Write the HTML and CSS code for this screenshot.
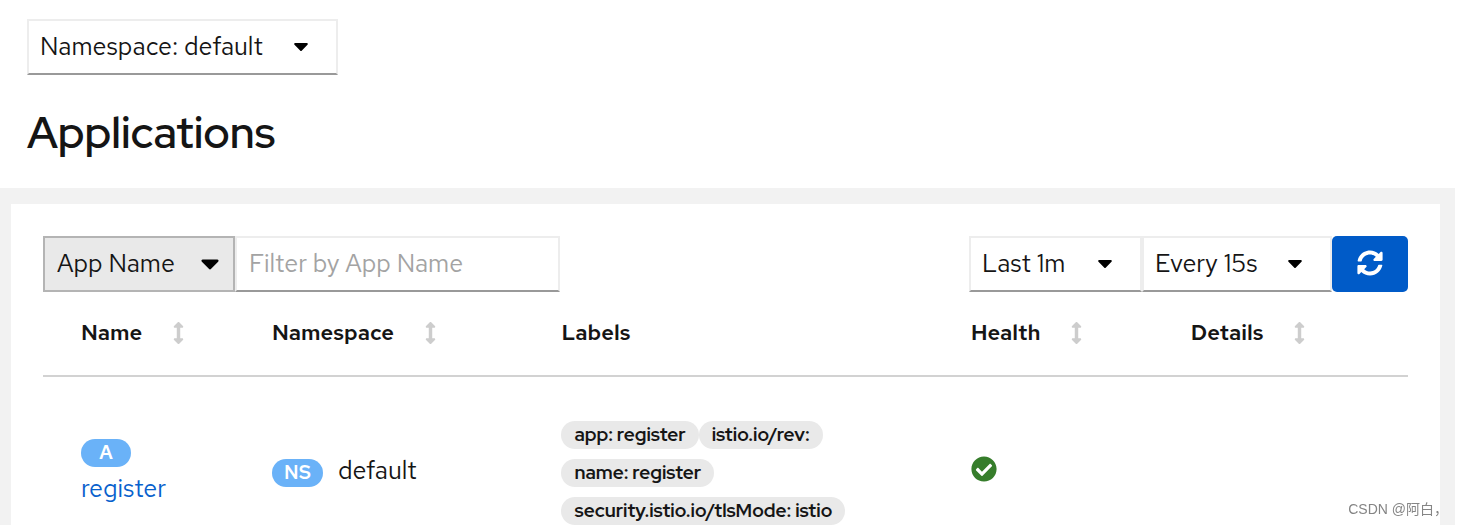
FILE: index.html
```html
<!DOCTYPE html>
<html lang="en">
<head>
<meta charset="utf-8">
<title>Applications</title>
<link rel="stylesheet" href="styles.css">
</head>
<body>
<svg class="sprite" aria-hidden="true">
  <symbol id="caret" viewBox="0 0 16 10"><path d="M2.2 1h11.6c1 0 1.4 1 .7 1.7L8.9 8.4a1.2 1.2 0 0 1-1.8 0L1.500 2.700C.8 2 1.200 1 2.200 1z"/></symbol>
  <symbol id="sort" viewBox="0 0 256 512"><path d="M214.059 377.941H168V134.059h46.059c21.382 0 32.090-25.851 16.971-40.971L144.971 7.029c-9.373-9.373-24.568-9.373-33.941 0L24.971 93.088c-15.119 15.119-4.411 40.971 16.971 40.971H88v243.882H41.941c-21.382 0-32.090 25.851-16.971 40.971l86.059 86.059c9.373 9.373 24.568 9.373 33.941 0l86.059-86.059c15.120-15.119 4.412-40.971-16.970-40.971z"/></symbol>
</svg>
<header class="masthead">
  <div class="picker picker-namespace">
    <select class="select" aria-label="Namespace"><option>Namespace: default</option></select>
    <svg class="caret" aria-hidden="true"><use href="#caret"/></svg>
  </div>
  <h1 class="title">Applications</h1>
</header>
<main class="content">
  <section class="card">
    <div class="toolbar">
      <div class="group">
        <div class="picker picker-filter">
          <select class="select select-gray" aria-label="Filter type"><option>App Name</option></select>
          <svg class="caret caret-large" aria-hidden="true"><use href="#caret"/></svg>
        </div>
        <input class="filter" type="text" placeholder="Filter by App Name" aria-label="Filter by App Name">
      </div>
      <div class="group">
        <div class="picker picker-duration">
          <select class="select" aria-label="Duration"><option>Last 1m</option></select>
          <svg class="caret" aria-hidden="true"><use href="#caret"/></svg>
        </div>
        <div class="picker picker-interval">
          <select class="select" aria-label="Refresh interval"><option>Every 15s</option></select>
          <svg class="caret" aria-hidden="true"><use href="#caret"/></svg>
        </div>
        <button class="refresh" type="button" aria-label="Refresh">
          <svg class="refresh-icon" viewBox="0 0 512 512" aria-hidden="true"><path d="M370.720 133.280C339.458 104.008 298.888 87.962 255.848 88c-77.458.068-144.328 53.178-162.791 126.850-1.344 5.363-6.122 9.150-11.651 9.150H24.103c-7.498 0-13.194-6.807-11.807-14.176C33.933 94.924 134.813 8 256 8c66.448 0 126.791 26.136 171.315 68.685L463.030 40.970C478.149 25.851 504 36.559 504 57.941V192c0 13.255-10.745 24-24 24H345.941c-21.382 0-32.090-25.851-16.971-40.971l41.750-41.749zM32 296h134.059c21.382 0 32.090 25.851 16.971 40.971l-41.750 41.750c31.262 29.273 71.835 45.319 114.876 45.280 77.418-.070 144.315-53.144 162.787-126.849 1.344-5.363 6.122-9.150 11.651-9.150h57.304c7.498 0 13.194 6.807 11.807 14.176C478.067 417.076 377.187 504 256 504c-66.448 0-126.791-26.136-171.315-68.685L48.970 471.030C33.851 486.149 8 475.441 8 454.059V320c0-13.255 10.745-24 24-24z"/></svg>
        </button>
      </div>
    </div>
    <table class="table">
      <colgroup><col class="col-name"><col class="col-namespace"><col class="col-labels"><col class="col-health"><col class="col-details"></colgroup>
      <thead>
        <tr>
          <th scope="col"><button class="sort" type="button">Name<svg class="sort-icon" aria-hidden="true"><use href="#sort"/></svg></button></th>
          <th scope="col"><button class="sort" type="button">Namespace<svg class="sort-icon" aria-hidden="true"><use href="#sort"/></svg></button></th>
          <th scope="col">Labels</th>
          <th scope="col"><button class="sort" type="button">Health<svg class="sort-icon" aria-hidden="true"><use href="#sort"/></svg></button></th>
          <th scope="col"><button class="sort" type="button">Details<svg class="sort-icon" aria-hidden="true"><use href="#sort"/></svg></button></th>
        </tr>
      </thead>
      <tbody>
        <tr>
          <td><div class="app"><span class="badge">A</span><a class="link" href="#">register</a></div></td>
          <td><div class="namespace"><span class="badge">NS</span><span>default</span></div></td>
          <td><div class="labels"><span class="label">app: register</span><span class="label">istio.io/rev:</span><span class="label">name: register</span><span class="label">security.istio.io/tlsMode: istio</span></div></td>
          <td><div class="status"><svg class="health" viewBox="0 0 512 512" role="img" aria-label="Healthy"><path d="M504 256c0 136.967-111.033 248-248 248S8 392.967 8 256 119.033 8 256 8s248 111.033 248 248zM227.314 387.314l184-184c6.248-6.248 6.248-16.379 0-22.627l-22.627-22.627c-6.248-6.249-16.379-6.249-22.628 0L216 308.118l-70.059-70.059c-6.248-6.248-16.379-6.248-22.628 0l-22.627 22.627c-6.248 6.248-6.248 16.379 0 22.627l104 104c6.249 6.249 16.379 6.249 22.628.001z"/></svg></div></td>
          <td></td>
        </tr>
      </tbody>
    </table>
  </section>
</main>
<div class="watermark" lang="zh-CN">CSDN @阿白，</div>
</body>
</html>
```
FILE: styles.css
```css
* { box-sizing: border-box; }

body {
  margin: 0;
  min-height: 100vh;
  display: flex;
  flex-direction: column;
  background: #fff;
  color: #151515;
  font: 25px/36px "Red Hat Text", Lato, "Liberation Sans", sans-serif;
}

.sprite { display: none; }

.masthead { padding: 19px 27px 24px; }

.title {
  margin: 25px 0 0;
  font-family: "Red Hat Display", "Red Hat Text", Lato, sans-serif;
  font-size: 44px;
  line-height: 64px;
  font-weight: 600;
}

.picker { display: grid; align-items: center; }
.picker > * { grid-area: 1 / 1; }
.picker-namespace { width: 311px; }
.picker-filter { width: 192px; }
.picker-duration { width: 173px; }
.picker-interval { width: 190px; }

.select,
.filter {
  width: 100%;
  height: 56px;
  padding: 0 11px;
  border: 2px solid #ededed;
  border-bottom: 2px solid #999;
  border-radius: 0;
  appearance: none;
  background: #fff;
  color: #151515;
  font: inherit;
}

.select-gray {
  padding: 0 12px;
  border: 2px solid #b4b4b4;
  background: #e9e9e9;
}

.caret {
  justify-self: end;
  width: 16px;
  height: 10px;
  margin-right: 29px;
  pointer-events: none;
}

.caret-large {
  width: 20px;
  height: 13px;
  margin-right: 15px;
}

.content {
  flex: 1;
  display: flex;
  margin-right: 2px;
  padding: 16px 15px 0 11px;
  background: #f2f2f2;
}

.card {
  flex: 1;
  min-width: 0;
  padding: 32px 32px 0;
  background: #fff;
}

.toolbar { display: flex; justify-content: space-between; }
.group { display: flex; }

.filter { width: 325px; padding: 0 12px 2px; }
.filter::placeholder { color: #a3a3a3; opacity: 1; }

.refresh {
  display: grid;
  place-items: center;
  width: 76px;
  height: 56px;
  padding: 0 0 2px;
  border: 0;
  border-radius: 5px;
  background: #005bc8;
}

.refresh-icon { width: 26px; height: 26px; fill: #fff; }

.table {
  width: 100%;
  table-layout: fixed;
  border-collapse: collapse;
}

.col-name { width: 14%; }
.col-namespace { width: 21.2%; }
.col-labels { width: 30%; }
.col-health { width: 16.1%; }
.col-details { width: 18.7%; }

.table th,
.table td { padding: 0 0 0 38px; text-align: left; vertical-align: middle; }

.table th {
  height: 84px;
  padding-bottom: 2px;
  border-bottom: 2px solid #d2d2d2;
  font-size: 22px;
  font-weight: 600;
}

.table td { padding-top: 44px; }

.sort {
  display: flex;
  align-items: center;
  gap: 31px;
  padding: 0;
  border: 0;
  background: none;
  color: inherit;
  font: inherit;
}

.sort-icon { width: 11px; height: 22px; fill: #cdcdcd; }

.app {
  display: flex;
  flex-direction: column;
  align-items: flex-start;
  gap: 4px;
}

.namespace {
  display: flex;
  align-items: baseline;
  gap: 15px;
  padding-bottom: 4px;
}

.badge {
  min-width: 50px;
  padding: 0 12px;
  border-radius: 14px;
  background: #6ab2f8;
  color: #fff;
  font-size: 19px;
  line-height: 28px;
  font-weight: 600;
  text-align: center;
}

.link { color: #0861cd; text-decoration: none; }

.labels { display: flex; flex-wrap: wrap; gap: 10px 0; }

.label {
  padding: 0 13px;
  border-radius: 14px;
  background: #e9e9e9;
  font-family: "Red Hat Display", "Red Hat Text", Lato, sans-serif;
  font-size: 19px;
  line-height: 28px;
  font-weight: 700;
}

.status { padding-bottom: 8px; }

.health { display: block; width: 26px; height: 26px; fill: #367d2b; }

.watermark {
  position: fixed;
  right: 9px;
  bottom: 4px;
  color: #858585;
  font: 14px/24px "Liberation Sans", "Noto Sans CJK SC", sans-serif;
}
```
